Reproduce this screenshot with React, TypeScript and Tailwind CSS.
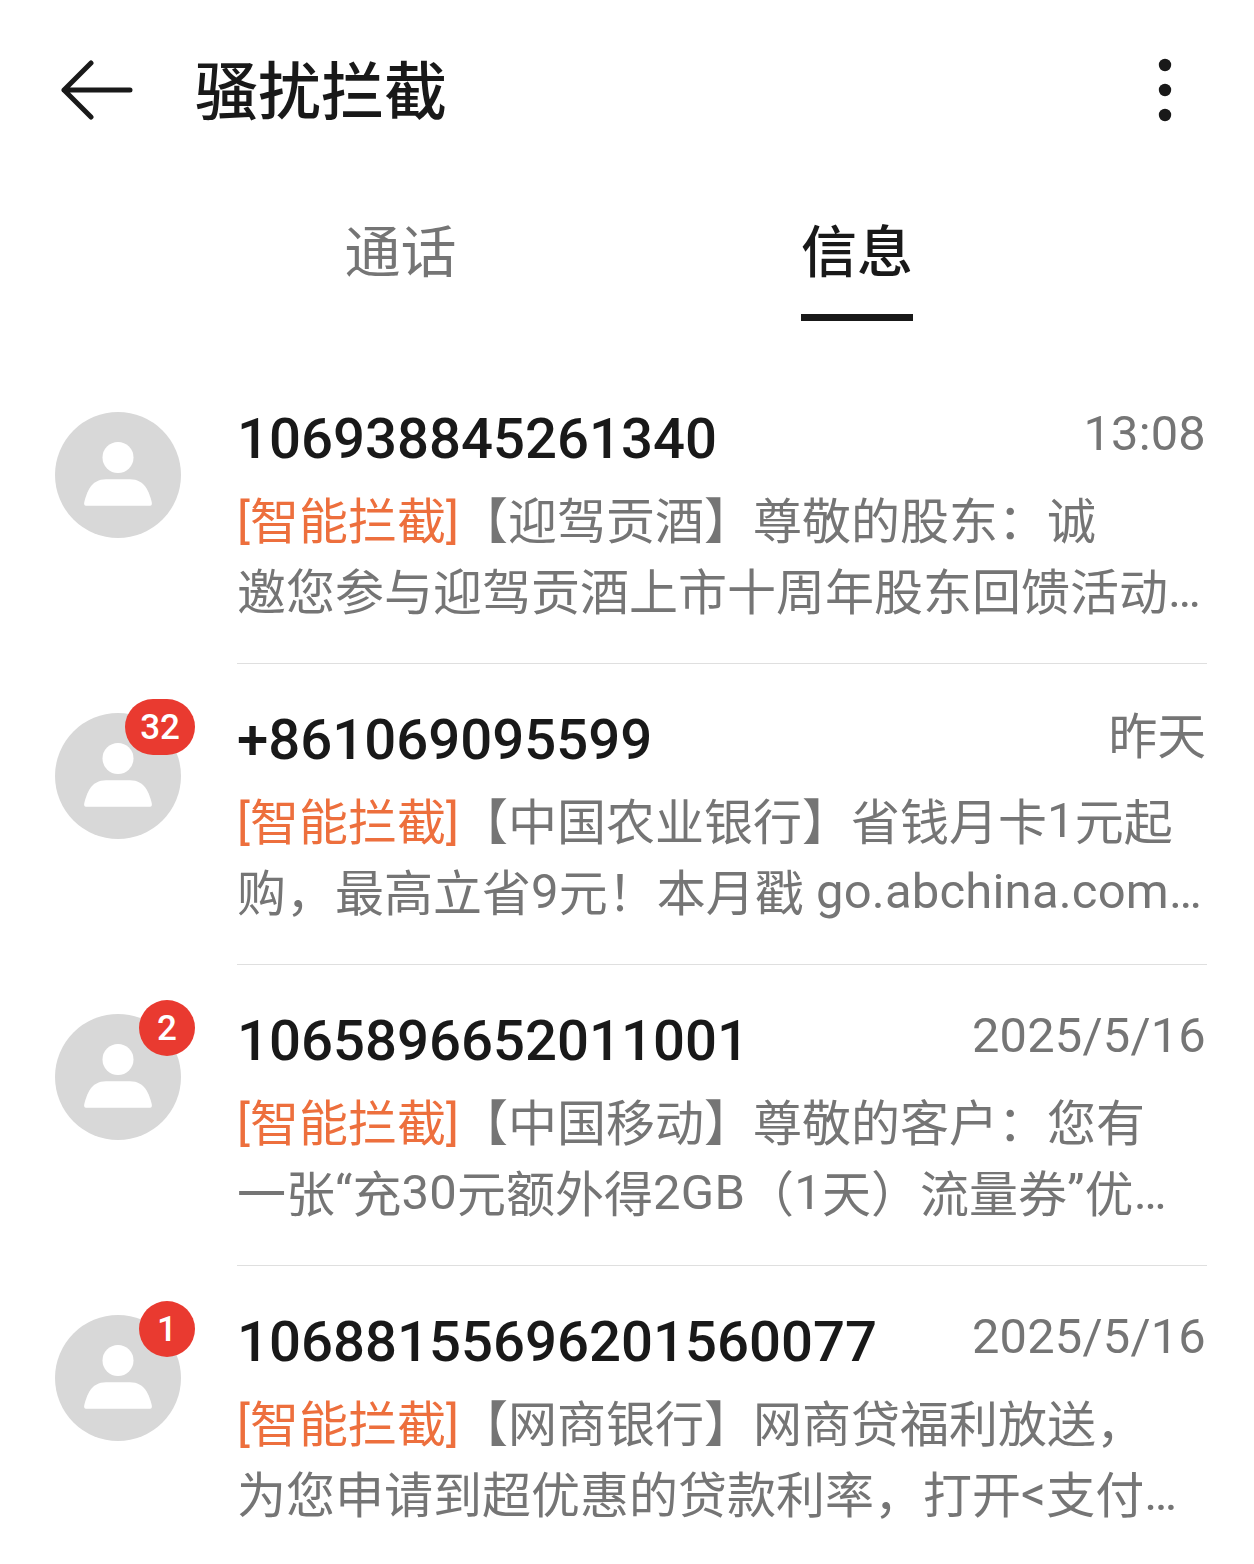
type Message = {
  number: string
  time: string
  badge?: string
  lines: [string, string]
}

const messages: Message[] = [
  { number: "106938845261340", time: "13:08", lines: ["【迎驾贡酒】尊敬的股东：诚", "邀您参与迎驾贡酒上市十周年股东回馈活动…"] },
  { number: "+861069095599", time: "昨天", badge: "32", lines: ["【中国农业银行】省钱月卡1元起", "购，最高立省9元！本月戳 go.abchina.com…"] },
  { number: "1065896652011001", time: "2025/5/16", badge: "2", lines: ["【中国移动】尊敬的客户：您有", "一张“充30元额外得2GB（1天）流量券”优…"] },
  { number: "10688155696201560077", time: "2025/5/16", badge: "1", lines: ["【网商银行】网商贷福利放送，", "为您申请到超优惠的贷款利率，打开<支付…"] },
]

// Latin runs sit slightly above the Chinese baseline
function MixedText({ text }: { text: string }) {
  return text.split(/([!-Z^-~“”…]+)/).map((part, i) =>
    i % 2 ? (
      <span key={i} className="align-[3px] leading-[0] tracking-[0.2px]">
        {part}
      </span>
    ) : (
      part
    ),
  )
}

function Avatar({ badge }: { badge?: string }) {
  return (
    <div className="relative h-[126px] w-[126px] shrink-0">
      <svg viewBox="0 0 126 126" className="h-full w-full">
        <circle cx="63" cy="63" r="63" fill="#d8d8d8" />
        <circle cx="63" cy="45.500" r="15.500" fill="#fff" />
        <path d="M29.300 90C32 80 36 67.300 51 67.300H75C90 67.300 94 80 96.700 90Q97.500 93.700 95 93.700H31Q28.500 93.700 29.300 90Z" fill="#fff" />
      </svg>
      {badge && (
        <span className="absolute -top-[14px] -right-[14px] flex h-14 min-w-14 items-center justify-center rounded-full bg-[#e93a30] px-[15px] pt-0.5 text-[35px] font-medium text-white">
          {badge}
        </span>
      )}
    </div>
  )
}

function MessageRow({ message }: { message: Message }) {
  return (
    <li className="flex h-[301px] pt-[49px] pl-[55px]">
      <Avatar badge={message.badge} />
      <div className="ml-14 h-[252px] w-[970px] border-b border-[#dfdfdf]">
        <div className="flex h-[75px] justify-between pr-px whitespace-nowrap">
          <h2 className="text-[56.3px] leading-[54px] font-medium text-[#191919]">{message.number}</h2>
          <time className="text-[48.8px] leading-[49px] text-[#757575]">
            <MixedText text={message.time} />
          </time>
        </div>
        <p className="text-[49px] leading-[71px] whitespace-nowrap text-[#757575]">
          <span className="text-[#ed6f3d]">
            <span className="align-[1px] leading-none">[</span>智能拦截<span className="align-[1px] leading-none">]</span>
          </span>
          <MixedText text={message.lines[0]} />
          <br />
          <MixedText text={message.lines[1]} />
        </p>
      </div>
    </li>
  )
}

export default function App() {
  return (
    <main
      lang="zh-CN"
      className="h-[1564px] w-[1254px] overflow-hidden bg-white font-[Roboto,'Noto_Sans_CJK_SC',sans-serif]"
    >
      <header className="flex h-[180px] items-center pr-[80px] pl-[60px]">
        <svg viewBox="0 0 74 60" className="h-[60px] w-[74px]" fill="none" stroke="#191919" strokeWidth="5" strokeLinecap="round" strokeLinejoin="round">
          <path d="M31 3 4 30l27 27M4 30h66" />
        </svg>
        <h1 className="ml-[61px] pt-[6px] text-[63px] leading-[80px] font-medium text-[#191919]">骚扰拦截</h1>
        <svg viewBox="0 0 18 66" className="ml-auto h-[66px] w-[18px]" fill="#191919">
          <circle cx="9" cy="8" r="6.200" />
          <circle cx="9" cy="33" r="6.200" />
          <circle cx="9" cy="58" r="6.200" />
        </svg>
      </header>
      <nav className="flex h-[183px] pt-[27px] pl-[173px] text-[56px] leading-[92px]">
        <button className="h-[114px] w-[455px] pb-[22px] text-[#757575]">通话</button>
        <button className="flex h-[114px] w-[458px] justify-center font-medium text-[#191919]">
          <span className="h-[114px] border-b-[7px] border-[#191919]">信息</span>
        </button>
      </nav>
      <ul>
        {messages.map((message) => (
          <MessageRow key={message.number} message={message} />
        ))}
      </ul>
    </main>
  )
}
